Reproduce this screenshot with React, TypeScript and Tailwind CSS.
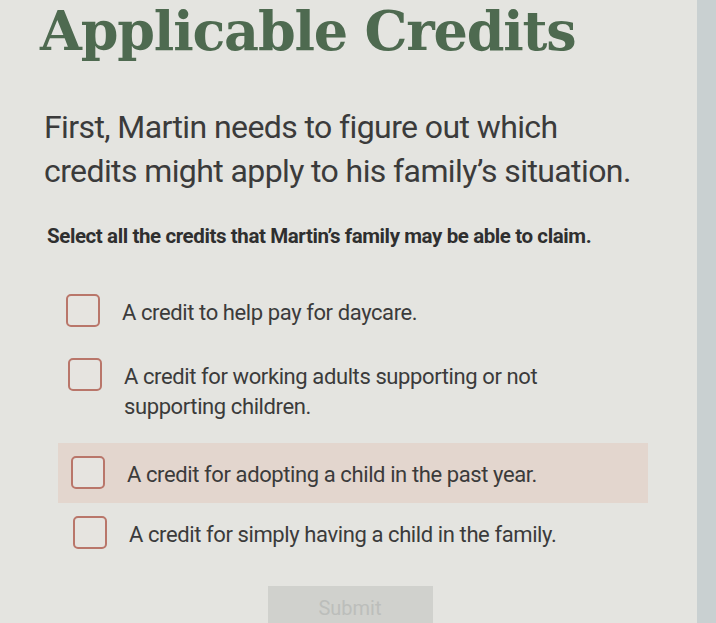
import { useState } from "react";

const options = [
  { text: "A credit to help pay for daycare.", row: "mt-[0px] ml-[26px]" },
  { text: "A credit for working adults supporting or not supporting children.", row: "mt-[4px] ml-[28px]" },
  { text: "A credit for adopting a child in the past year.", row: "mt-[8px] ml-[18px] w-[590px] bg-[#e3d6ce] pl-[13px]" },
  { text: "A credit for simply having a child in the family.", row: "mt-[0px] ml-[33px]" },
];

export default function App() {
  const [checked, setChecked] = useState<boolean[]>([false, false, false, false]);

  return (
    <div className="flex h-[623px] w-[716px] overflow-hidden bg-[#c9d0d1]">
      <div className="flex w-[697px] shrink-0 flex-col bg-[#e4e4e0] pl-[40px] pr-[20px] text-[#3b3b3b] [font-family:Roboto,sans-serif]">
        <h1 className="mt-[-5px] text-[54px] font-bold leading-[72px] tracking-[-1.2px] text-[#4e6a50] [font-family:'DejaVu_Serif',serif]">
          Applicable Credits
        </h1>
        <p className="mt-[38px] pl-[4px] text-[32px] leading-[44px] tracking-[-0.6px]">
          First, Martin needs to figure out which
          <br />
          credits might apply to his family’s situation.
        </p>
        <p className="mt-[29px] pl-[7px] text-[20.5px] font-bold leading-[28px] tracking-[-0.4px] text-[#2f2f2f]">
          Select all the credits that Martin’s family may be able to claim.
        </p>
        <ul className="mt-[31px] flex flex-col">
          {options.map((o, i) => (
            <li
              key={o.text}
              className={`flex items-start gap-[22px] py-[13px] ${o.row}`}
              onClick={() => setChecked((c) => c.map((v, j) => (j === i ? !v : v)))}
            >
              <span className="h-[33px] w-[34px] shrink-0 rounded-[5px] border-2 border-[#b9766a] bg-[#e6e4e0]">
                {checked[i] && <span className="block text-center text-[22px] leading-[29px] text-[#b9766a]">✓</span>}
              </span>
              <span className="max-w-[440px] pt-[4px] text-[22px] leading-[30px] tracking-[-0.4px]">{o.text}</span>
            </li>
          ))}
        </ul>
        <div className="mt-[23px] flex justify-center pr-[17px]">
          <button className="h-[38px] w-[165px] shrink-0 self-start bg-[#d0d1cd] pt-[6px] text-[20px] leading-[24px] text-[#bcbebb]">
            Submit
          </button>
        </div>
      </div>
    </div>
  );
}
